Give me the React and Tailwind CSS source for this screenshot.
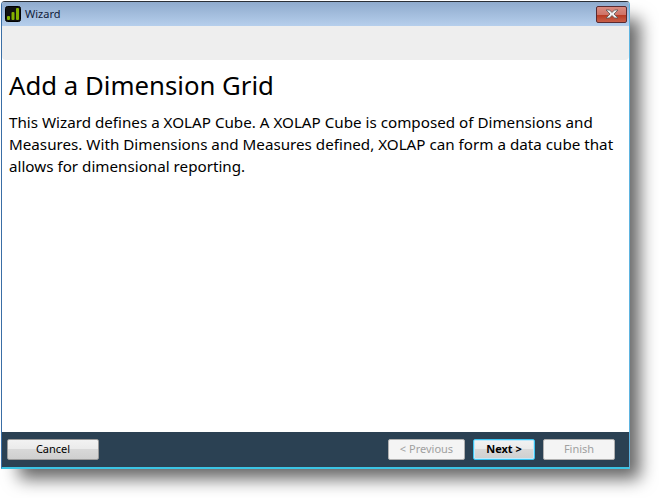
import React from "react";

const font = { fontFamily: '"Noto Sans", "Open Sans", sans-serif' };

function Logo() {
  return (
    <svg width="16" height="16" viewBox="0 0 16 16" className="shrink-0">
      <rect x="0.5" y="0.5" width="15" height="15" rx="2" fill="#111" stroke="#000" />
      <rect x="2" y="10" width="3" height="4" rx="1" fill="#84b000" />
      <rect x="6.5" y="6" width="3" height="8" rx="1" fill="#84b000" />
      <rect x="11" y="2" width="3" height="12" rx="1" fill="#84b000" />
    </svg>
  );
}

function CloseButton() {
  return (
    <div className="flex h-[17px] w-[31px] items-center justify-center rounded-[2px] border border-[#5a2a30] bg-[linear-gradient(#d98b80_0%,#cf7468_50%,#b83a22_55%,#c8604a_100%)]">
      <svg width="14" height="10" viewBox="0 0 14 10">
        <path d="M1 1 H4.5 L7 3.5 L9.5 1 H13 L9 5 L13 9 H9.5 L7 6.5 L4.5 9 H1 L5 5 Z" fill="#f1f1f1" stroke="#555" strokeWidth="0.8" />
      </svg>
    </div>
  );
}

function WizardButton({ label, className }) {
  return (
    <div className={`flex h-[21px] items-center justify-center rounded-[2px] border text-[11px] ${className}`}>
      {label}
    </div>
  );
}

export default function App() {
  return (
    <div className="h-[498px] w-[659px] overflow-hidden bg-white" style={font}>
      <div className="ml-px mt-px flex h-[468px] w-[629px] flex-col overflow-hidden rounded-t-[4px] border border-[#2a2f36] border-b-[#3cc4e4] border-l-[#3a6ea5] border-r-[#5fb4e0] border-b-2 shadow-[14px_14px_16px_-4px_rgba(0,0,0,0.6)]">
        {/* title bar */}
        <div className="flex h-[24px] shrink-0 items-center gap-[4px] bg-[linear-gradient(#8fabcd,#b6cfec)] pl-[3px] pr-[2px]">
          <Logo />
          <span className="flex-1 text-[11px] text-[#10203a]">Wizard</span>
          <CloseButton />
        </div>

        <div className="flex min-h-0 flex-1 flex-col bg-white">
          <div className="h-[34px] shrink-0 rounded-b-[4px] bg-[#eeeeee]"></div>

          <div className="flex-1 px-[7px] text-black">
            <h1 className="mt-[8px] text-[25.75px] leading-[34px]">Add a Dimension Grid</h1>
            <p className="mt-[9px] text-[15.2px] leading-[22px]">
              This Wizard defines a XOLAP Cube. A XOLAP Cube is composed of Dimensions and Measures. With Dimensions and Measures defined, XOLAP can form a data cube that allows for dimensional reporting.
            </p>
          </div>

          {/* footer */}
          <div className="flex h-[35px] shrink-0 items-center gap-[8px] bg-[#2b4153] pl-[5px] pr-[14px]">
            <WizardButton
              label="Cancel"
              className="mr-auto w-[92px] border-[#9a9a9a] bg-[linear-gradient(#f2f2f2_0%,#ebebeb_45%,#d8d8d8_50%,#cfcfcf_100%)] text-black"
            />
            <WizardButton label="< Previous" className="w-[77px] border-[#b0b0b0] bg-[#f4f4f4] text-[#a0a0a0]" />
            <WizardButton
              label="Next >"
              className="w-[62px] border-[#3cc4f0] bg-[linear-gradient(#f2f2f2_0%,#ebebeb_45%,#d8d8d8_50%,#cfcfcf_100%)] font-bold text-black shadow-[inset_0_0_0_1px_#bfe9fb]"
            />
            <WizardButton label="Finish" className="w-[72px] border-[#b0b0b0] bg-[#f4f4f4] text-[#a0a0a0]" />
          </div>
        </div>
      </div>
    </div>
  );
}
